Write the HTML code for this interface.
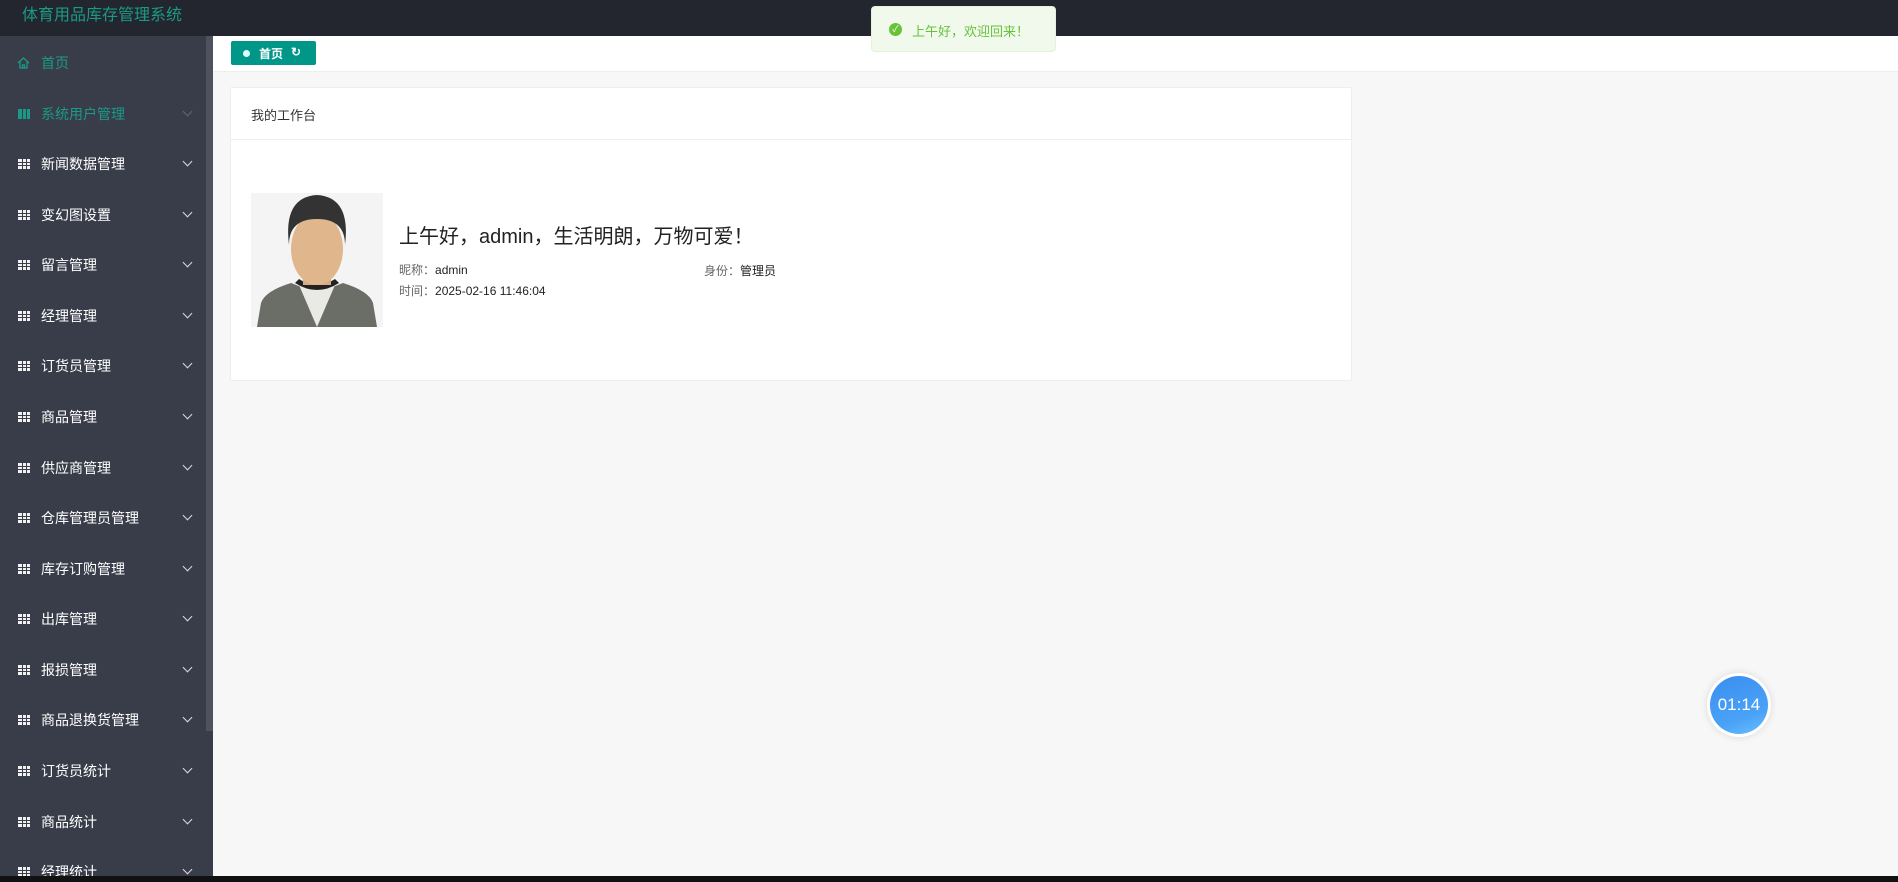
<!DOCTYPE html>
<html><head><meta charset="utf-8"><style>
*{margin:0;padding:0;box-sizing:border-box}
body{width:1898px;height:882px;overflow:hidden;background:#f7f7f7;font-family:"Liberation Sans","Noto Sans CJK SC",sans-serif;position:relative}
.hdr{position:absolute;left:0;top:0;width:1898px;height:36px;background:#23262e}
.hdr .t{position:absolute;left:22px;top:1px;color:#1a9a86;font-size:16px}
.side{position:absolute;left:0;top:36px;width:213px;height:840px;background:#393d49;overflow:hidden}
.sb{position:absolute;left:206px;top:36px;width:7px;height:695px;background:#4e525d}
.it{position:absolute;left:0;width:206px;height:50px;color:#fff;font-size:14px}
.it span{position:absolute;left:41px;top:50%;transform:translateY(-50%)}
.ic{position:absolute;left:18px;top:50%;margin-top:-5px;width:12px;height:10px;background:
linear-gradient(90deg,transparent 4px,#393d49 4px,#393d49 5px,transparent 5px,transparent 8px,#393d49 8px,#393d49 9px,transparent 9px),
linear-gradient(0deg,transparent 3px,#393d49 3px,#393d49 4px,transparent 4px,transparent 6px,#393d49 6px,#393d49 7px,transparent 7px),#f2f2f2}
.ch{position:absolute;left:184px;top:50%;margin-top:-6px;width:7px;height:7px;border-right:1.5px solid #ddd;border-bottom:1.5px solid #ddd;transform:rotate(45deg)}
.act{color:#1a9a86}.act .ic{background:
linear-gradient(90deg,transparent 4px,#393d49 4px,#393d49 5px,transparent 5px,transparent 8px,#393d49 8px,#393d49 9px,transparent 9px),#1a9a86}
.act .ch{border-color:#5a6a6a}
.tabs{position:absolute;left:213px;top:36px;width:1685px;height:36px;background:#fff;border-bottom:1px solid #eee}
.tab{position:absolute;left:18px;top:5px;width:85px;height:24px;background:#009688;border-radius:2px;color:#fff;font-size:12px;font-weight:bold}
.card{position:absolute;left:230px;top:87px;width:1122px;height:294px;background:#fff;border:1px solid #eee;border-radius:2px}
.card .h{height:52px;border-bottom:1px solid #eee;font-size:13px;color:#333;padding:17px 0 0 20px}
.gr{position:absolute;left:168px;top:132px;font-size:20px;color:#222}
.inf{position:absolute;font-size:12px;color:#666}
.inf b{font-weight:normal;color:#222}
.toast{position:absolute;left:871px;top:6px;width:185px;height:46px;background:#f0f9eb;border:1px solid #e1f3d8;border-radius:4px;color:#67c23a;font-size:13px}
.bot{position:absolute;left:0;top:876px;width:1898px;height:6px;background:#111}
.tm{position:absolute;left:1707px;top:673px;width:64px;height:64px;border-radius:50%;background:#fff;box-shadow:0 0 8px rgba(0,0,0,.12)}
.tm div{position:absolute;left:3px;top:3px;width:58px;height:58px;border-radius:50%;background:linear-gradient(160deg,#3b8df0,#4aa3f7 70%,#6cc0ff);color:#fff;font-size:17px;text-align:center;line-height:58px}
</style></head><body>
<div class="hdr"><div class="t">体育用品库存管理系统</div></div>
<div class="side">
<div class="it act" style="top:2px"><svg style="position:absolute;left:17px;top:19px" width="13" height="12" viewBox="0 0 13 12"><path d="M1 6L6.5 1L12 6M3 5V11H10V5M5.5 11V8H7.5V11" fill="none" stroke="#1a9a86" stroke-width="1.3"/></svg><span>首页</span></div>
<div class="it act" style="top:53px"><i class="ic"></i><span>系统用户管理</span><i class="ch"></i></div>
<div class="it" style="top:103px"><i class="ic"></i><span>新闻数据管理</span><i class="ch"></i></div>
<div class="it" style="top:154px"><i class="ic"></i><span>变幻图设置</span><i class="ch"></i></div>
<div class="it" style="top:204px"><i class="ic"></i><span>留言管理</span><i class="ch"></i></div>
<div class="it" style="top:255px"><i class="ic"></i><span>经理管理</span><i class="ch"></i></div>
<div class="it" style="top:305px"><i class="ic"></i><span>订货员管理</span><i class="ch"></i></div>
<div class="it" style="top:356px"><i class="ic"></i><span>商品管理</span><i class="ch"></i></div>
<div class="it" style="top:407px"><i class="ic"></i><span>供应商管理</span><i class="ch"></i></div>
<div class="it" style="top:457px"><i class="ic"></i><span>仓库管理员管理</span><i class="ch"></i></div>
<div class="it" style="top:508px"><i class="ic"></i><span>库存订购管理</span><i class="ch"></i></div>
<div class="it" style="top:558px"><i class="ic"></i><span>出库管理</span><i class="ch"></i></div>
<div class="it" style="top:609px"><i class="ic"></i><span>报损管理</span><i class="ch"></i></div>
<div class="it" style="top:659px"><i class="ic"></i><span>商品退换货管理</span><i class="ch"></i></div>
<div class="it" style="top:710px"><i class="ic"></i><span>订货员统计</span><i class="ch"></i></div>
<div class="it" style="top:761px"><i class="ic"></i><span>商品统计</span><i class="ch"></i></div>
<div class="it" style="top:811px"><i class="ic"></i><span>经理统计</span><i class="ch"></i></div>
</div>
<div class="sb"></div>
<div class="tabs"><div class="tab"><span style="position:absolute;left:12px;top:9px;width:7px;height:7px;border-radius:50%;background:#dff"></span><span style="position:absolute;left:28px;top:4px">首页</span><span style="position:absolute;left:60px;top:4px;font-size:12px">&#8635;</span></div></div>
<div class="card"><div class="h">我的工作台</div>
<svg style="position:absolute;left:20px;top:105px" width="132" height="134" viewBox="0 0 132 134">
<rect width="132" height="134" fill="#f4f4f4"/>
<path d="M6 134 L10 110 Q14 98 40 90 L66 100 L92 90 Q118 98 122 110 L126 134Z" fill="#6b6e66"/>
<path d="M48 92 L66 134 L84 92 L66 98Z" fill="#e9e9e6"/>
<path d="M44 90 Q66 104 88 90 L84 86 Q66 98 48 86Z" fill="#222"/>
<rect x="52" y="66" width="28" height="26" fill="#d9ab80"/>
<ellipse cx="66" cy="56" rx="26" ry="36" fill="#e0b68c"/>
<path d="M38 52 Q32 4 66 2 Q100 4 94 52 Q94 26 66 26 Q38 26 38 52Z" fill="#333"/>
</svg>
<div class="gr">上午好，admin，生活明朗，万物可爱！</div>
<div class="inf" style="left:168px;top:173px">昵称：<b>admin</b></div>
<div class="inf" style="left:168px;top:194px">时间：<b>2025-02-16 11:46:04</b></div>
<div class="inf" style="left:473px;top:174px">身份：<b>管理员</b></div>
</div>
<div class="toast"><span style="position:absolute;left:17px;top:16px;width:13px;height:13px;border-radius:50%;background:#67c23a;color:#fff;font-size:9px;text-align:center;line-height:13px">✓</span><span style="position:absolute;left:40px;top:14px">上午好，欢迎回来！</span></div>
<div class="tm"><div>01:14</div></div>
<div class="bot"></div>
</body></html>
